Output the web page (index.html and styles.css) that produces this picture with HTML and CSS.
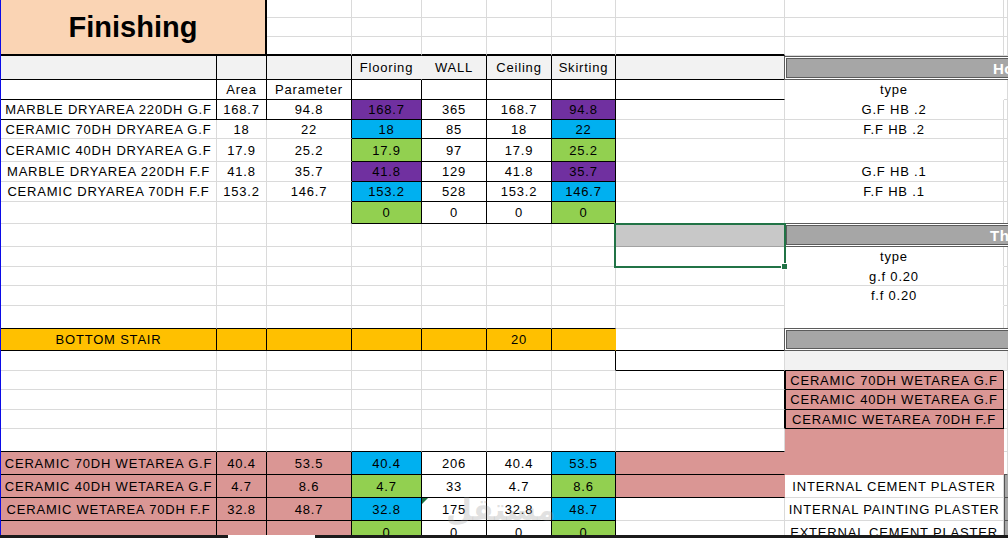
FILE: index.html
```html
<!DOCTYPE html>
<html lang="en">
<head>
<meta charset="utf-8">
<title>Finishing</title>
<link rel="stylesheet" href="styles.css">
</head>
<body>
<div class="sheet">
  <div class="grid">
    <!-- row 1 -->
    <div class="c title">Finishing</div>
    <div class="c"></div><div class="c"></div><div class="c"></div><div class="c"></div><div class="c"></div><div class="c"></div><div class="c"></div><div class="c"></div>
    <!-- row 2 -->
    <div class="c"></div><div class="c"></div><div class="c"></div><div class="c"></div><div class="c"></div><div class="c"></div><div class="c"></div><div class="c"></div>
    <!-- row 3 -->
    <div class="c b2"></div><div class="c b2"></div><div class="c b2"></div><div class="c b2"></div><div class="c b2"></div><div class="c b2"></div><div class="c"></div><div class="c"></div>
    <!-- row 4 -->
    <div class="c lg r b"></div><div class="c lg r b"></div><div class="c lg r b"></div>
    <div class="c lg nr b">Flooring</div><div class="c lg r b">WALL</div><div class="c lg r b">Ceiling</div><div class="c lg r b">Skirting</div>
    <div class="c lg b"></div>
    <div class="c bar bar-ho">Hollow Block</div>
    <!-- row 5 -->
    <div class="c r b"></div><div class="c r b">Area</div><div class="c r b">Parameter</div>
    <div class="c r b"></div><div class="c r b"></div><div class="c r b"></div><div class="c r b"></div>
    <div class="c b"></div><div class="c nr nb">type</div><div class="c"></div>
    <!-- row 6 -->
    <div class="c r b">MARBLE DRYAREA 220DH G.F</div><div class="c r b">168.7</div><div class="c r b">94.8</div>
    <div class="c pu r b">168.7</div><div class="c r b">365</div><div class="c r b">168.7</div><div class="c pu r b">94.8</div>
    <div class="c"></div><div class="c">G.F HB .2</div><div class="c"></div>
    <!-- row 7 -->
    <div class="c">CERAMIC 70DH DRYAREA G.F</div><div class="c">18</div><div class="c r">22</div>
    <div class="c bl r b">18</div><div class="c r b">85</div><div class="c r b">18</div><div class="c bl r b">22</div>
    <div class="c"></div><div class="c">F.F HB .2</div><div class="c"></div>
    <!-- row 8 -->
    <div class="c">CERAMIC 40DH DRYAREA G.F</div><div class="c">17.9</div><div class="c r">25.2</div>
    <div class="c gr r b">17.9</div><div class="c r b">97</div><div class="c r b">17.9</div><div class="c gr r b">25.2</div>
    <div class="c"></div><div class="c"></div><div class="c"></div>
    <!-- row 9 -->
    <div class="c">MARBLE DRYAREA 220DH F.F</div><div class="c">41.8</div><div class="c r">35.7</div>
    <div class="c pu r b">41.8</div><div class="c r b">129</div><div class="c r b">41.8</div><div class="c pu r b">35.7</div>
    <div class="c"></div><div class="c">G.F HB .1</div><div class="c"></div>
    <!-- row 10 -->
    <div class="c">CERAMIC DRYAREA 70DH F.F</div><div class="c">153.2</div><div class="c r">146.7</div>
    <div class="c bl r b">153.2</div><div class="c r b">528</div><div class="c r b">153.2</div><div class="c bl r b">146.7</div>
    <div class="c"></div><div class="c">F.F HB .1</div><div class="c"></div>
    <!-- row 11 -->
    <div class="c"></div><div class="c"></div><div class="c r"></div>
    <div class="c gr r b">0</div><div class="c r b">0</div><div class="c r b">0</div><div class="c gr r b">0</div>
    <div class="c"></div><div class="c"></div><div class="c"></div>
    <!-- row 12 -->
    <div class="c"></div><div class="c"></div><div class="c"></div><div class="c"></div><div class="c"></div><div class="c"></div><div class="c"></div>
    <div class="c sel"><span class="selbox"></span><span class="handle"></span></div>
    <div class="c bar bar-th mt">Thickness</div>
    <!-- row 13 -->
    <div class="c"></div><div class="c"></div><div class="c"></div><div class="c"></div><div class="c"></div><div class="c"></div><div class="c"></div>
    <div class="c"></div><div class="c nb">type</div><div class="c"></div>
    <!-- row 14 -->
    <div class="c"></div><div class="c"></div><div class="c"></div><div class="c"></div><div class="c"></div><div class="c"></div><div class="c"></div>
    <div class="c"></div><div class="c">g.f 0.20</div><div class="c"></div>
    <!-- row 15 -->
    <div class="c"></div><div class="c"></div><div class="c"></div><div class="c"></div><div class="c"></div><div class="c"></div><div class="c"></div>
    <div class="c"></div><div class="c nb">f.f 0.20</div><div class="c"></div>
    <!-- row 16 -->
    <div class="c b"></div><div class="c b"></div><div class="c b"></div><div class="c b"></div><div class="c b"></div><div class="c b"></div><div class="c b"></div>
    <div class="c"></div><div class="c nb"></div><div class="c"></div>
    <!-- row 17 -->
    <div class="c ye r b">BOTTOM STAIR</div><div class="c ye r b"></div><div class="c ye r b"></div>
    <div class="c ye r b"></div><div class="c ye r b"></div><div class="c ye r b">20</div><div class="c ye b nr"></div>
    <div class="c b"></div>
    <div class="c bar mt"></div>
    <!-- row 18 -->
    <div class="c"></div><div class="c"></div><div class="c"></div><div class="c"></div><div class="c"></div><div class="c"></div><div class="c r"></div>
    <div class="c b"></div><div class="c lg b nr"></div><div class="c lg"></div>
    <!-- row 19 -->
    <div class="c"></div><div class="c"></div><div class="c"></div><div class="c"></div><div class="c"></div><div class="c"></div><div class="c"></div>
    <div class="c r"></div><div class="c pk r b lb">CERAMIC 70DH WETAREA G.F</div><div class="c"></div>
    <!-- row 20 -->
    <div class="c"></div><div class="c"></div><div class="c"></div><div class="c"></div><div class="c"></div><div class="c"></div><div class="c"></div>
    <div class="c r"></div><div class="c pk r b lb">CERAMIC 40DH WETAREA G.F</div><div class="c"></div>
    <!-- row 21 -->
    <div class="c"></div><div class="c"></div><div class="c"></div><div class="c"></div><div class="c"></div><div class="c"></div><div class="c"></div>
    <div class="c r"></div><div class="c pk r b lb">CERAMIC WETAREA 70DH F.F</div><div class="c"></div>
    <!-- row 22 -->
    <div class="c b"></div><div class="c b"></div><div class="c b"></div><div class="c b"></div><div class="c b"></div><div class="c b"></div><div class="c b"></div>
    <div class="c b"></div><div class="c pk nr nb"></div><div class="c"></div>
    <!-- row 23 -->
    <div class="c pk r b">CERAMIC 70DH WETAREA G.F</div><div class="c pk r b">40.4</div><div class="c pk r b">53.5</div>
    <div class="c bl r b">40.4</div><div class="c r b">206</div><div class="c r b">40.4</div><div class="c bl r b">53.5</div>
    <div class="c pk b nr"></div><div class="c pk nr nb"></div><div class="c scb"></div>
    <!-- row 24 -->
    <div class="c pk r b">CERAMIC 40DH WETAREA G.F</div><div class="c pk r b">4.7</div><div class="c pk r b">8.6</div>
    <div class="c gr r b">4.7</div><div class="c r b">33</div><div class="c r b">4.7</div><div class="c gr r b">8.6</div>
    <div class="c pk b nr"></div><div class="c">INTERNAL CEMENT PLASTER</div><div class="c scr"></div>
    <!-- row 25 -->
    <div class="c pk r b">CERAMIC WETAREA 70DH F.F</div><div class="c pk r b">32.8</div><div class="c pk r b">48.7</div>
    <div class="c bl r b">32.8</div><div class="c r b tri">175</div><div class="c r b">32.8</div><div class="c bl r b">48.7</div>
    <div class="c"></div><div class="c">INTERNAL PAINTING PLASTER</div><div class="c scr"></div>
    <!-- row 26 -->
    <div class="c pk r b"></div><div class="c pk r b"></div><div class="c pk r b"></div>
    <div class="c gr r b">0</div><div class="c r b">0</div><div class="c r b">0</div><div class="c gr r b">0</div>
    <div class="c"></div><div class="c">EXTERNAL CEMENT PLASTER</div><div class="c scr"></div>
  </div>
  <div class="wm">مستقل</div>
</div>
<div class="edge"><div class="dark first"></div><div class="gap"></div><div class="dark rest"></div></div>
</body>
</html>
```

FILE: styles.css
```css
html, body {
  margin: 0;
  padding: 0;
  background: #ffffff;
}
body {
  width: 1008px;
  height: 538px;
  overflow: hidden;
}
.sheet {
  position: relative;
  height: 535px;
  overflow: hidden;
  border-left: 1px solid #0b0be8;
}
.grid {
  display: grid;
  grid-template-columns: 216px 50px 85px 70px 65px 65px 64px 169px 219px 1fr;
  grid-template-rows: 18px 19px 19px 24px 20px 20px 19px 23px 20px 20px 22px 23px 20px 19px 20px 23px 22px 20px 19px 20px 19px 23px 23px 23px 23px 23px;
}
.c {
  box-sizing: border-box;
  min-width: 0;
  border-right: 1px solid #dadada;
  border-bottom: 1px solid #dadada;
  display: flex;
  align-items: center;
  justify-content: center;
  overflow: hidden;
  white-space: nowrap;
  font-family: "Liberation Sans", Arial, sans-serif;
  font-size: 13px;
  letter-spacing: 0.8px;
  color: #000;
}
.r { border-right-color: #000; }
.b { border-bottom-color: #000; }
.nr { border-right-color: transparent; }
.nb { border-bottom-color: transparent; }
.b2 { border-bottom: 2px solid #000; }
.lb { box-shadow: inset 1px 0 0 #000; }

.lg { background: #f2f2f2; }
.pu { background: #7030a0; }
.bl { background: #00b0f0; }
.gr { background: #92d050; }
.ye { background: #ffc000; }
.pk { background: #da9694; }

.title {
  grid-column: span 2;
  grid-row: span 3;
  background: #fad4b4;
  border-right: 2px solid #000;
  border-bottom: 2px solid #000;
  font-size: 29px;
  font-weight: bold;
  letter-spacing: 0;
}

.bar {
  grid-column: span 2;
  margin-left: -1px;
  margin-right: -30px;
  border: 3px double #5b5b5b;
  background: #a6a6a6;
  background-clip: padding-box;
  color: #ffffff;
  font-weight: bold;
  font-size: 15px;
  letter-spacing: 0.5px;
  justify-content: flex-start;
}
.bar-ho { padding-left: 206px; }
.bar-th { padding-left: 203px; }
.mt { margin-top: -1px; }

.sel {
  position: relative;
  overflow: visible;
  background: #c8c8c8;
  border-bottom-color: #a3a3a3;
}
.selbox {
  position: absolute;
  left: -2px;
  top: -1px;
  width: 172px;
  height: 45px;
  box-sizing: border-box;
  border: 2px solid #217346;
}
.handle {
  position: absolute;
  left: 165px;
  top: 39px;
  width: 7px;
  height: 7px;
  box-sizing: border-box;
  background: #217346;
  border: 1px solid #ffffff;
}

.tri { position: relative; }
.tri::before {
  content: "";
  position: absolute;
  left: 0;
  top: 0;
  border-top: 6px solid #1e7145;
  border-right: 6px solid transparent;
}

.scb { border-bottom-color: #555555; }
.scr {
  background: #a6a6a6;
  border-left: 1px solid #555555;
  border-right: none;
  border-bottom-color: #555555;
}

.wm {
  position: absolute;
  left: 445px;
  top: 492px;
  direction: rtl;
  font-family: "DejaVu Sans", sans-serif;
  font-weight: bold;
  font-size: 30px;
  color: rgba(150, 150, 150, 0.28);
}

.edge {
  display: flex;
  height: 3px;
}
.edge .dark { background: #1b1b1b; }
.edge .first { width: 228px; }
.edge .gap { width: 87px; background: #ffffff; }
.edge .rest { flex: 1; }
```
